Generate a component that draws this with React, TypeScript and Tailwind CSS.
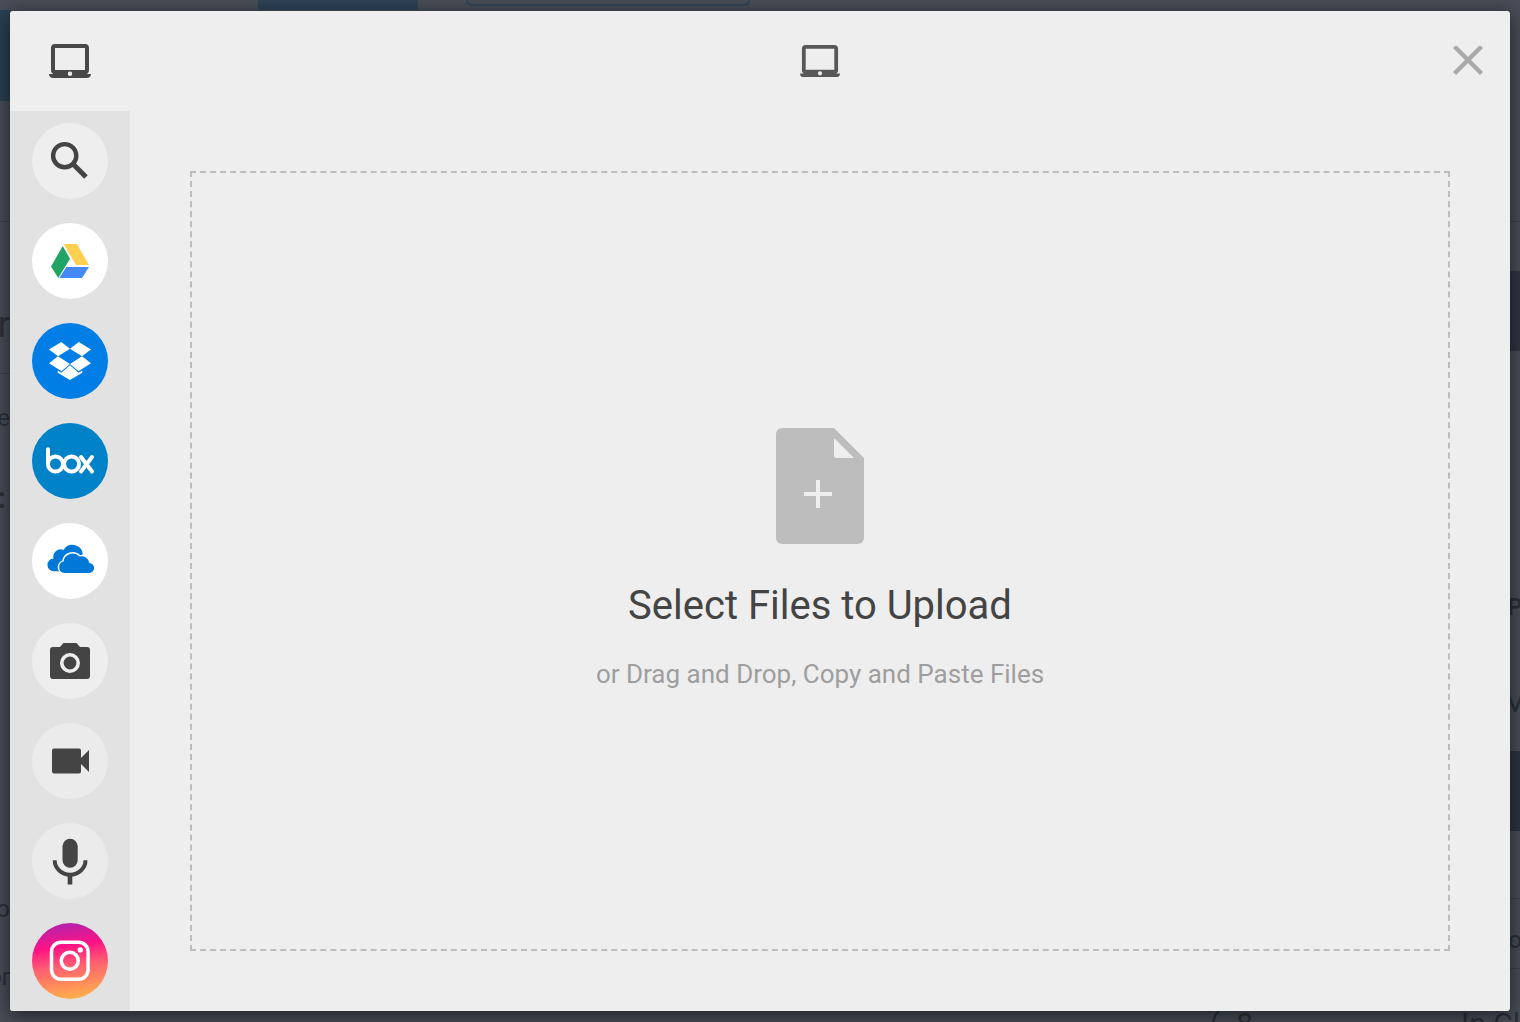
import type { ReactNode } from 'react';

const LaptopIcon = ({ className }: { className: string }) => (
  <svg viewBox="0 0 42 34" className={className} fill="currentColor" aria-hidden="true">
    <path
      fillRule="evenodd"
      d="M6 0h30a4 4 0 0 1 4 4v22a4 4 0 0 1-2 4h4c0 2.500-2 4-4 4H4c-2 0-4-1.500-4-4h4a4 4 0 0 1-2-4V4a4 4 0 0 1 4-4zM6 4v22h30V4zM21 27.500a2.200 2.200 0 1 0 0 4.400 2.200 2.200 0 0 0 0-4.400z"
    />
  </svg>
);

const Glyph = ({ children }: { children: ReactNode }) => (
  <svg viewBox="0 0 76 76" className="size-full" fill="currentColor" aria-hidden="true">
    {children}
  </svg>
);

const SOURCES = [
  {
    label: 'Web Search',
    color: 'bg-[#eeeeee] text-[#444444]',
    icon: (
      <>
        <circle cx="32.700" cy="32.700" r="11.600" fill="none" stroke="currentColor" strokeWidth="4.400" />
        <path d="M41.500 41.500L54 54" fill="none" stroke="currentColor" strokeWidth="5" />
      </>
    ),
  },
  {
    label: 'Google Drive',
    color: 'bg-white',
    icon: (
      <>
        <path fill="#20a464" d="M30.700 23L38 35.700L26.300 55L19 43.500Z" />
        <path fill="#ffd04f" d="M31.700 21H45L57 42H44Z" />
        <path fill="#4688f4" d="M34.300 44H57L50 55H27.300Z" />
      </>
    ),
  },
  {
    label: 'Dropbox',
    color: 'bg-[#007ee5] text-white',
    icon: (
      <>
        <path d="M29.300 19L38 25.800L26 33.300L17 26.600Z" />
        <path d="M46.700 19L38 25.800L50 33.300L59 26.600Z" />
        <path d="M26 33.300L38 41L29.500 48.300L17 40.200Z" />
        <path d="M50 33.300L38 41L46.500 48.300L59 40.200Z" />
        <path d="M38 42.300L46.700 49.700L50.300 47.500V49.700L38 57L25.700 49.700V47.500L29.300 49.700Z" />
      </>
    ),
  },
  {
    label: 'Box',
    color: 'bg-[#0082c8] text-white',
    icon: (
      <g fill="none" stroke="currentColor" strokeWidth="4" strokeLinecap="round">
        <line x1="16" y1="26.300" x2="16" y2="41" />
        <circle cx="23.500" cy="41" r="7.500" />
        <circle cx="39.600" cy="41" r="7.500" />
        <line x1="49" y1="34" x2="60" y2="48.500" />
        <line x1="60" y1="34" x2="49" y2="48.500" />
      </g>
    ),
  },
  {
    label: 'OneDrive',
    color: 'bg-white text-[#0078d7]',
    icon: (
      <>
        <path d="M28 48H22A6.300 6.300 0 0 1 21.600 35.800A7.300 7.300 0 0 1 31.500 27A10.300 10.300 0 0 1 50.700 31L48 38L30 48Z" />
        <path d="M22 48.300A6.200 6.200 0 0 1 21.600 35.600L30 40V48.300Z" />
        <path
          stroke="#ffffff"
          strokeWidth="3"
          paintOrder="stroke"
          d="M32.500 50A5.800 5.800 0 0 1 31.500 38.600A9.200 9.200 0 0 1 47.500 33.600A7.500 7.500 0 0 1 57.200 40A5 5 0 0 1 57 50Z"
        />
      </>
    ),
  },
  {
    label: 'Take Photo',
    color: 'bg-[#eeeeee] text-[#444444]',
    icon: (
      <>
        <path d="M31.500 20H44.500L48 24H55A3 3 0 0 1 58 27V53A3 3 0 0 1 55 56H21A3 3 0 0 1 18 53V27A3 3 0 0 1 21 24H28Z" />
        <circle cx="38" cy="40" r="8.200" fill="none" stroke="#eeeeee" strokeWidth="3.600" />
      </>
    ),
  },
  {
    label: 'Record Video',
    color: 'bg-[#ebebeb] text-[#444444]',
    icon: (
      <path d="M22 25.400H47A2 2 0 0 1 49 27.400V35L57 27V49L49 41V48.600A2 2 0 0 1 47 50.600H22A2 2 0 0 1 20 48.600V27.400A2 2 0 0 1 22 25.400Z" />
    ),
  },
  {
    label: 'Record Audio',
    color: 'bg-[#ebebeb] text-[#444444]',
    icon: (
      <>
        <rect x="30.500" y="15.700" width="15.200" height="29" rx="7.600" />
        <path d="M22.700 37.300A15.400 14.400 0 0 0 53.500 37.300" fill="none" stroke="currentColor" strokeWidth="4" />
        <path d="M35.700 52H40.300V61.500H35.700Z" />
      </>
    ),
  },
  {
    label: 'Instagram',
    color: 'bg-linear-[172deg,#a226b4_0%,#ff1285_32%,#ff6070_56%,#ffbd45_100%] text-white',
    icon: (
      <>
        <g fill="none" stroke="currentColor" strokeWidth="3.500">
          <rect x="19.500" y="19.300" width="36.600" height="37" rx="9.500" />
          <circle cx="37.800" cy="37.700" r="8.500" />
        </g>
        <circle cx="48.300" cy="27" r="2.700" />
      </>
    ),
  },
];

const LEFT_ROWS = [
  { text: '', box: 'h-[91px] bg-[#2a4053]' },
  { text: '', box: 'h-[121px] border-b border-[#3d424b]' },
  { text: 'r', box: 'h-[152px] border-b border-[#3d424b] pb-8 text-4xl' },
  { text: 'ee', box: 'h-[60px] text-2xl' },
  { text: ':', box: 'h-[80px] pr-1 text-3xl font-bold' },
  { text: 'o', box: 'h-[411px] text-2xl' },
  { text: 'or', box: 'h-[68px] text-2xl' },
];

const RIGHT_ROWS = [
  { text: '', box: 'h-[212px] border-b border-[#3d424b]' },
  { text: '', box: 'h-[49px]' },
  { text: '', box: 'h-[80px] bg-[#2f3444]' },
  { text: 'P', box: 'h-[272px] text-2xl font-bold' },
  { text: 'M', box: 'h-[95px] text-3xl' },
  { text: '', box: 'h-[33px]' },
  { text: '', box: 'h-[80px] bg-[#2d3440]' },
  { text: '', box: 'h-[68px] border-b border-[#3d424b]' },
  { text: 'o', box: 'h-[70px] border-b border-[#3d424b] pb-3 text-2xl' },
];

function Strip({ rows, align }: { rows: { text: string; box: string }[]; align: string }) {
  return (
    <div className="w-[10px] overflow-hidden">
      {rows.map(({ text, box }, i) => (
        <div key={i} className={`flex items-end leading-8 whitespace-nowrap ${align} ${box}`}>
          {text}
        </div>
      ))}
    </div>
  );
}

// Page left dimmed behind the dialog
function Backdrop() {
  return (
    <div className="flex h-screen flex-col overflow-hidden bg-[#484d57] text-[#2b3038]" aria-hidden="true">
      <div className="flex h-[10px] shrink-0">
        <div className="w-[258px]" />
        <div className="w-40 rounded-bl-sm bg-[#2e4357]" />
        <div className="ml-12 h-[6px] w-[284px] rounded-b-md border-2 border-t-0 border-[#2e4458]" />
      </div>
      <div className="flex min-h-0 flex-1 justify-between">
        <Strip rows={LEFT_ROWS} align="justify-end" />
        <Strip rows={RIGHT_ROWS} align="justify-center" />
      </div>
      <div className="flex h-[14px] shrink-0 justify-end gap-52 overflow-hidden text-3xl leading-8">
        <span className="flex gap-4">
          <span>(</span>
          <span>8</span>
        </span>
        <span>In Cl</span>
      </div>
    </div>
  );
}

export default function App() {
  return (
    <div className="relative min-h-screen font-[Roboto,sans-serif]">
      <Backdrop />

      <div
        role="dialog"
        aria-label="Upload files"
        className="absolute inset-x-[10px] inset-y-[11px] flex overflow-hidden rounded-[3px] bg-[#eeeeee] shadow-[0_4px_20px_rgba(0,0,0,0.6)]"
      >
        <div className="flex w-[120px] shrink-0 flex-col">
          <button
            type="button"
            aria-label="My Device"
            className="flex h-[100px] shrink-0 items-center justify-center text-[#484848]"
          >
            <LaptopIcon className="w-[42px]" />
          </button>
          <nav aria-label="Sources" className="min-h-0 flex-1 overflow-hidden bg-[#e2e2e2]">
            <ul className="flex flex-col items-center gap-6 py-3">
              {SOURCES.map(({ label, color, icon }) => (
                <li key={label}>
                  <button
                    type="button"
                    aria-label={label}
                    className={`block size-[76px] rounded-full ${color}`}
                  >
                    <Glyph>{icon}</Glyph>
                  </button>
                </li>
              ))}
            </ul>
          </nav>
        </div>

        <div className="flex min-w-0 flex-1 flex-col">
          <header className="grid h-[100px] shrink-0 grid-cols-[1fr_auto_1fr] items-center">
            <span />
            <LaptopIcon className="w-10 text-[#585858]" />
            <button
              type="button"
              aria-label="Close"
              className="mr-3 flex size-[60px] items-center justify-center justify-self-end text-[#a9a9a9]"
            >
              <svg viewBox="0 0 30 30" className="size-[30px]" aria-hidden="true">
                <path d="M1.500 0.500L28.500 27.500M28.500 0.500L1.500 27.500" fill="none" stroke="currentColor" strokeWidth="4.400" />
              </svg>
            </button>
          </header>

          <main className="flex min-h-0 flex-1 p-15">
            <button
              type="button"
              className="flex flex-1 flex-col items-center justify-center border-2 border-dashed border-[#bdbdbd] pb-1"
            >
              <svg viewBox="0 0 88 116" className="w-[88px]" aria-hidden="true">
                <path
                  fill="#bdbdbd"
                  fillRule="evenodd"
                  d="M6 0H58L88 30V110A6 6 0 0 1 82 116H6A6 6 0 0 1 0 110V6A6 6 0 0 1 6 0ZM58 10V28A2 2 0 0 0 60 30H78Z"
                />
                <path d="M42 52V80M28 66H56" stroke="#eeeeee" strokeWidth="4" />
              </svg>
              <span className="mt-[38px] text-[40px] leading-[48px] text-[#444444]">
                Select Files to Upload
              </span>
              <span className="mt-7 text-[26px] leading-8 text-[#9e9e9e]">
                or Drag and Drop, Copy and Paste Files
              </span>
            </button>
          </main>
        </div>
      </div>
    </div>
  );
}
